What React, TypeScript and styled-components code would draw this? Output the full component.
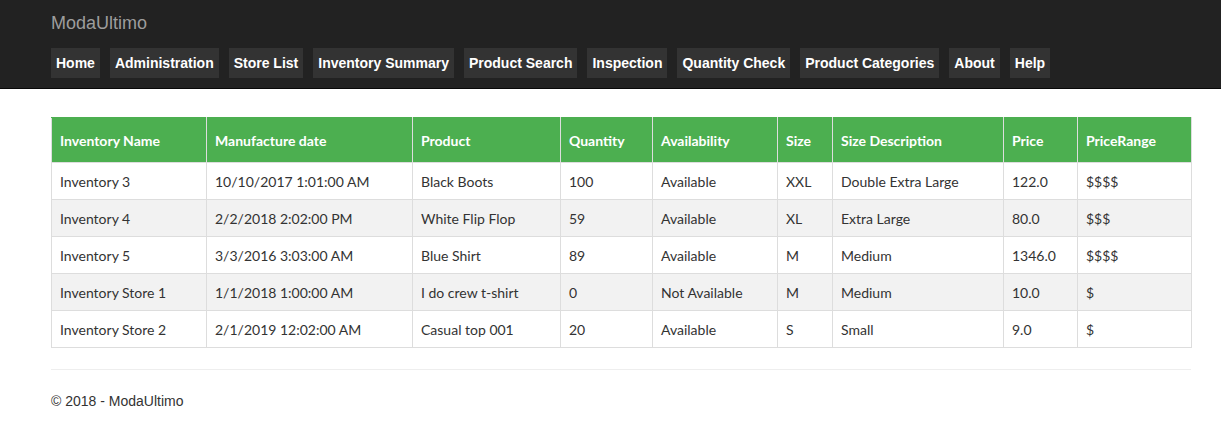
import React from "react";
import styled, { createGlobalStyle } from "styled-components";

const GlobalStyle = createGlobalStyle`
  body {
    margin: 0;
    background: #fff;
    font-family: "Liberation Sans", Arial, sans-serif;
    font-size: 14px;
    color: #333;
  }
`;

const NavBar = styled.header`
  background-color: #222;
  border-bottom: 1px solid #080808;
  height: 89px;
  box-sizing: border-box;
`;

const NavInner = styled.div`
  padding: 12px 51px 0;
  display: flex;
  flex-direction: column;
`;

const Brand = styled.div`
  color: #9d9d9d;
  font-size: 18px;
  line-height: 22px;
  height: 36px;
`;

const Menu = styled.nav`
  display: flex;
  gap: 10px;
`;

const MenuItem = styled.a`
  background-color: #333;
  color: #fff;
  font-weight: bold;
  font-size: 14px;
  line-height: 30px;
  height: 30px;
  padding: 0 5px;
  text-decoration: none;
`;

const Main = styled.main`
  padding: 28px 31px 0 51px;
`;

const Table = styled.table`
  width: 1140px;
  border-collapse: collapse;
  table-layout: fixed;
  font-family: Lato, "Open Sans", sans-serif;
  font-size: 14px;
`;

const HeadCell = styled.th`
  background-color: #4caf50;
  color: #fff;
  text-align: left;
  font-weight: bold;
  height: 45px;
  padding: 0 8px;
  border: 1px solid #ddd;
  border-top-color: #4caf50;
  box-sizing: border-box;
`;

const Row = styled.tr<{ $striped: boolean }>`
  background-color: ${(p) => (p.$striped ? "#f2f2f2" : "#fff")};
`;

const Cell = styled.td`
  height: 37px;
  padding: 0 8px;
  border: 1px solid #ddd;
  color: #333;
  white-space: nowrap;
  box-sizing: border-box;
`;

const Rule = styled.hr`
  border: 0;
  border-top: 1px solid #eee;
  margin: 21px 0 0;
  width: 1140px;
`;

const Footer = styled.footer`
  padding: 23px 0 0;
  font-size: 14px;
  color: #333;
`;

const links = [
  "Home",
  "Administration",
  "Store List",
  "Inventory Summary",
  "Product Search",
  "Inspection",
  "Quantity Check",
  "Product Categories",
  "About",
  "Help",
];

const columns: [string, number][] = [
  ["Inventory Name", 155],
  ["Manufacture date", 206],
  ["Product", 148],
  ["Quantity", 92],
  ["Availability", 125],
  ["Size", 55],
  ["Size Description", 171],
  ["Price", 74],
  ["PriceRange", 114],
];

const rows = [
  ["Inventory 3", "10/10/2017 1:01:00 AM", "Black Boots", "100", "Available", "XXL", "Double Extra Large", "122.0", "$$$$"],
  ["Inventory 4", "2/2/2018 2:02:00 PM", "White Flip Flop", "59", "Available", "XL", "Extra Large", "80.0", "$$$"],
  ["Inventory 5", "3/3/2016 3:03:00 AM", "Blue Shirt", "89", "Available", "M", "Medium", "1346.0", "$$$$"],
  ["Inventory Store 1", "1/1/2018 1:00:00 AM", "I do crew t-shirt", "0", "Not Available", "M", "Medium", "10.0", "$"],
  ["Inventory Store 2", "2/1/2019 12:02:00 AM", "Casual top 001", "20", "Available", "S", "Small", "9.0", "$"],
];

function App() {
  return (
    <>
      <GlobalStyle />
      <NavBar>
        <NavInner>
          <Brand>ModaUltimo</Brand>
          <Menu>
            {links.map((l) => (
              <MenuItem key={l} href="#">
                {l}
              </MenuItem>
            ))}
          </Menu>
        </NavInner>
      </NavBar>
      <Main>
        <Table>
          <colgroup>
            {columns.map(([name, w]) => (
              <col key={name} style={{ width: w }} />
            ))}
          </colgroup>
          <thead>
            <tr>
              {columns.map(([name]) => (
                <HeadCell key={name}>{name}</HeadCell>
              ))}
            </tr>
          </thead>
          <tbody>
            {rows.map((r, i) => (
              <Row key={r[0]} $striped={i % 2 === 1}>
                {r.map((c, j) => (
                  <Cell key={j}>{c}</Cell>
                ))}
              </Row>
            ))}
          </tbody>
        </Table>
        <Rule />
        <Footer>© 2018 - ModaUltimo</Footer>
      </Main>
    </>
  );
}

export default App;
